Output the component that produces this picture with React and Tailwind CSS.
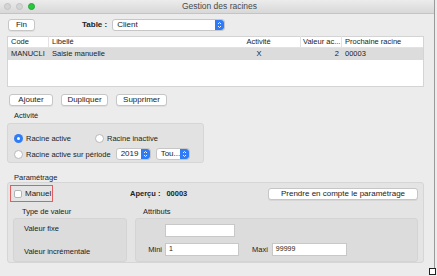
import React from "react";

function MacButton({ children, className = "" }) {
  return (
    <div
      className={
        "h-[12px] flex items-center justify-center bg-white border border-[#c6c6c6] rounded-[3px] shadow-[0_1px_0_rgba(0,0,0,0.06)] text-[8px] text-[#222] " +
        className
      }
    >
      {children}
    </div>
  );
}

function Stepper() {
  return (
    <div className="w-[9px] h-full bg-[#2f7cf6] rounded-r-[3px] flex flex-col items-center justify-center">
      <svg width="5" height="8" viewBox="0 0 5 8">
        <path d="M1 3 L2.5 1.5 L4 3" stroke="white" strokeWidth="0.9" fill="none" />
        <path d="M1 5 L2.5 6.5 L4 5" stroke="white" strokeWidth="0.9" fill="none" />
      </svg>
    </div>
  );
}

function Select({ value, className = "" }) {
  return (
    <div
      className={
        "h-[12px] flex items-stretch bg-white border border-[#c6c6c6] rounded-[3px] text-[8px] text-[#222] " +
        className
      }
    >
      <div className="flex-1 flex items-center pl-[4px]">{value}</div>
      <Stepper />
    </div>
  );
}

function Radio({ checked, label }) {
  return (
    <div className="flex items-center gap-[3px] text-[7.5px] text-[#222]">
      {checked ? (
        <div className="w-[9px] h-[9px] rounded-full bg-[#2f7cf6] flex items-center justify-center">
          <div className="w-[3px] h-[3px] rounded-full bg-white" />
        </div>
      ) : (
        <div className="w-[9px] h-[9px] rounded-full bg-white border border-[#b8b8b8]" />
      )}
      <span>{label}</span>
    </div>
  );
}

function Input({ value = "", className = "" }) {
  return (
    <div
      className={
        "h-[13px] bg-white border border-[#c8c8c8] flex items-center pl-[3px] text-[7px] text-[#222] " +
        className
      }
    >
      {value}
    </div>
  );
}

export default function App() {
  return (
    <div
      className="relative w-[437px] h-[276px] bg-[#ececec] overflow-hidden"
      style={{ fontFamily: '"Liberation Sans", Arial, sans-serif' }}
    >
      <div className="w-[435px] h-[273px] flex flex-col border-r border-[#9a9a9a]">
        {/* Title bar */}
        <div className="relative h-[14px] flex items-center bg-gradient-to-b from-[#ececec] to-[#d8d8d8] border-b border-[#c4c4c4]">
          <div className="flex gap-[5px] pl-[4px]">
            <div className="w-[7px] h-[7px] rounded-full bg-[#d4d4d4] border border-[#c2c2c2]" />
            <div className="w-[7px] h-[7px] rounded-full bg-[#d4d4d4] border border-[#c2c2c2]" />
            <div className="w-[7px] h-[7px] rounded-full bg-[#27c93f] border border-[#1eaa32]" />
          </div>
          <div className="flex-1 text-center text-[8.5px] text-[#4a4a4a] pr-[30px]">Gestion des racines</div>
        </div>

        {/* Top row */}
        <div className="flex items-center mt-[5px] pl-[8px]">
          <MacButton className="w-[27px]">Fin</MacButton>
          <span className="ml-[47px] text-[8px] font-bold text-[#222]">Table :</span>
          <Select value="Client" className="ml-[5px] w-[113px]" />
        </div>

        {/* Table */}
        <div className="mt-[5px] ml-[7px] w-[417px] h-[51px] bg-white border border-[#d4d4d4] text-[7.5px] text-[#222]">
          <div className="flex h-[11px] items-center border-b border-[#e2e2e2]">
            <div className="w-[41px] pl-[3px] border-r border-[#e2e2e2]">Code</div>
            <div className="w-[168px] pl-[3px]">Libellé</div>
            <div className="w-[84px] text-center border-r border-[#e2e2e2]">Activité</div>
            <div className="w-[41px] pl-[2px] border-r border-[#e2e2e2] whitespace-nowrap overflow-hidden">Valeur ac...</div>
            <div className="flex-1 pl-[3px]">Prochaine racine</div>
          </div>
          <div className="flex h-[12px] items-center bg-[#dcdcdc]">
            <div className="w-[41px] pl-[3px]">MANUCLI</div>
            <div className="w-[168px] pl-[3px]">Saisie manuelle</div>
            <div className="w-[84px] text-center">X</div>
            <div className="w-[41px] text-right pr-[3px]">2</div>
            <div className="flex-1 pl-[3px]">00003</div>
          </div>
        </div>

        {/* Buttons */}
        <div className="flex gap-[8px] mt-[7px] pl-[9px]">
          <MacButton className="w-[44px]">Ajouter</MacButton>
          <MacButton className="w-[47px]">Dupliquer</MacButton>
          <MacButton className="w-[51px]">Supprimer</MacButton>
        </div>

        {/* Activité */}
        <div className="mt-[5px] pl-[14px] text-[7.5px] text-[#222] leading-[9px]">Activité</div>
        <div className="mt-[3px] ml-[7px] w-[197px] h-[40px] bg-[#e2e2e2] border border-[#d6d6d6] rounded-[3px] pl-[6px] pt-[9px] flex flex-col gap-[4px]">
          <div className="flex">
            <div className="w-[81px]">
              <Radio checked label="Racine active" />
            </div>
            <Radio label="Racine inactive" />
          </div>
          <div className="flex items-center">
            <Radio label="Racine active sur période" />
            <Select value="2019" className="ml-[5px] w-[35px]" />
            <Select value="Tou..." className="ml-[5px] w-[34px]" />
          </div>
        </div>

        {/* Paramétrage */}
        <div className="mt-[10px] pl-[14px] text-[7.5px] text-[#222] leading-[9px]">Paramétrage</div>
        <div className="ml-[7px] w-[417px] h-[81px] bg-[#e4e4e4] border border-[#d6d6d6] rounded-[3px] flex flex-col">
          <div className="flex items-center mt-[2px] pl-[2px]">
            <div className="w-[43px] h-[17px] border border-[#e0605f] flex items-center gap-[3px] pl-[3px] text-[8px] text-[#222]">
              <div className="w-[8px] h-[8px] bg-white border border-[#b4b4b4] rounded-[2px]" />
              <span>Manuel</span>
            </div>
            <span className="ml-[77px] text-[7.5px] font-bold text-[#222]">Aperçu :</span>
            <span className="ml-[6px] text-[7.5px] font-bold text-[#222]">00003</span>
            <MacButton className="ml-auto mr-[5px] w-[150px]">Prendre en compte le paramétrage</MacButton>
          </div>
          <div className="flex gap-[8px] mt-[5px] px-[5px] text-[7.5px] text-[#222]">
            <div className="w-[114px] flex flex-col">
              <div className="pl-[9px] leading-[9px]">Type de valeur</div>
              <div className="mt-[2px] h-[44px] bg-[#dcdcdc] border border-[#d4d4d4] rounded-[3px] pl-[10px] flex flex-col justify-center gap-[11px]">
                <div>Valeur fixe</div>
                <div>Valeur incrémentale</div>
              </div>
            </div>
            <div className="flex-1 flex flex-col">
              <div className="pl-[8px] leading-[9px]">Attributs</div>
              <div className="mt-[2px] h-[44px] bg-[#dcdcdc] border border-[#d4d4d4] rounded-[3px] flex flex-col justify-center gap-[6px]">
                <div className="pl-[29px]">
                  <Input className="w-[70px]" />
                </div>
                <div className="flex items-center">
                  <span className="w-[29px] text-right pr-[3px]">Mini</span>
                  <Input value="1" className="w-[74px]" />
                  <span className="ml-[13px] mr-[4px]">Maxi</span>
                  <Input value="99999" className="w-[75px]" />
                </div>
              </div>
            </div>
          </div>
        </div>
      </div>

      {/* resize handle */}
      <div className="absolute right-[1px] bottom-[1px] w-[7px] h-[7px] border border-[#222] bg-white" />
    </div>
  );
}
